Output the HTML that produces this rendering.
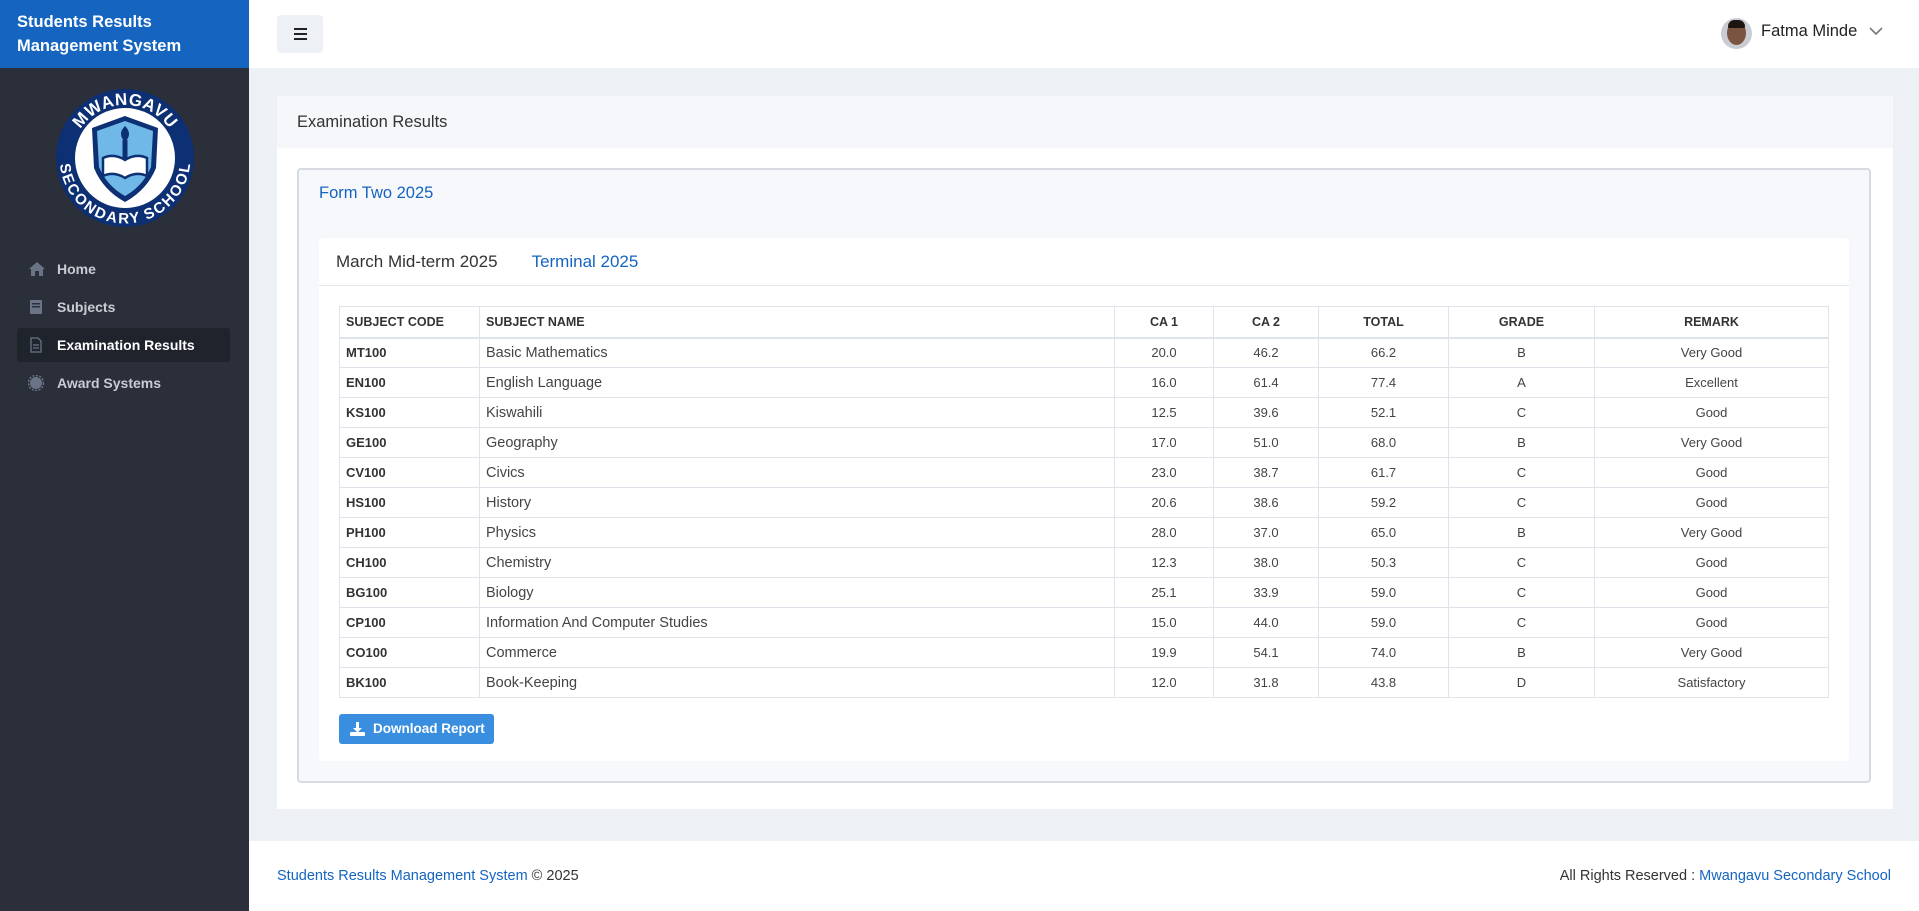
<!DOCTYPE html>
<html><head><meta charset="utf-8">
<style>
*{box-sizing:border-box;margin:0;padding:0}
body{width:1919px;height:911px;overflow:hidden;font-family:"Liberation Sans",sans-serif;background:#edf0f5;position:relative;color:#333}
.side{position:absolute;left:0;top:0;width:249px;height:911px;background:#2a2f3a}
.brand{height:68px;background:#1565c0;color:#fff;font-weight:bold;font-size:16.5px;line-height:24px;padding:10px 0 0 17px}
.nav{position:absolute;left:17px;width:213px;height:34px;color:#c8ccd4;font-size:14px;font-weight:bold;line-height:34px;padding-left:40px}
.nav.act{background:#1f232c;color:#fff;border-radius:3px}
.nav svg{position:absolute;left:11px;top:9px}
.top{position:absolute;left:249px;top:0;right:0;height:68px;background:#fff}
.tog{position:absolute;left:28px;top:15px;width:46px;height:38px;background:#edf0f5;border-radius:4px}
.tog i{position:absolute;left:17px;width:13px;height:2px;background:#222}
.card{position:absolute;left:277px;top:96px;width:1616px;height:713px;background:#fff}
.chead{height:52px;background:#f5f7fa;font-size:16.5px;line-height:52px;padding-left:20px;color:#333}
.box{position:absolute;left:20px;top:72px;width:1574px;height:615px;border:2px solid #d5dae3;border-radius:4px;background:#f6f8fb}
.blue{color:#1565c0}
.inner{position:absolute;left:20px;top:68px;width:1530px;height:523px;background:#fff;border-radius:3px}
.tabs{height:48px;border-bottom:1px solid #e3e7ee;font-size:17px;line-height:48px;padding-left:17px}
table{position:absolute;left:20px;top:68px;width:1490px;border-collapse:collapse;font-size:13px;color:#444}
td,th{border:1px solid #dfe3ea;height:30px;padding:0 6px;text-align:center}
th{height:31px;font-weight:bold;color:#333;font-size:12.5px;border-bottom:2px solid #dfe3ea}
td:nth-child(1),th:nth-child(1){text-align:left;font-weight:bold;color:#333}
td:nth-child(2),th:nth-child(2){text-align:left}
td:nth-child(2){font-size:14.5px}
.btn{position:absolute;left:20px;top:476px;width:155px;height:30px;background:#3a8ee0;border-radius:3px;color:#fff;font-weight:bold;font-size:13.5px;line-height:30px;padding-left:34px}
.foot{position:absolute;left:249px;top:841px;right:0;height:70px;background:#fff;font-size:14.5px;line-height:70px}
</style></head><body>
<div class="side">
<div class="brand">Students Results<br>Management System</div>
<svg style="position:absolute;left:55px;top:88px" width="140" height="140" viewBox="0 0 140 140">
<defs><path id="tp" d="M70,70 m-53,0 a53,53 0 1,1 106,0"/><path id="bp" d="M70,70 m-55,0 a55,55 0 0,0 110,0"/></defs>
<circle cx="70" cy="70" r="69" fill="#0d2f73"/>
<circle cx="70" cy="70" r="50" fill="#fff"/>
<path d="M70,28 L103,40 L101,80 Q92,102 70,114 Q48,102 39,80 L37,40 Z" fill="#0d2f73"/>
<path d="M70,33 L98,43 L96,79 Q88,98 70,108 Q52,98 44,79 L42,43 Z" fill="#6fb8e8"/>
<path d="M48,70 Q59,65 70,72 Q81,65 92,70 L92,88 Q81,83 70,90 Q59,83 48,88 Z" fill="#fff" stroke="#0d2f73" stroke-width="2.5"/>
<rect x="67.5" y="52" width="5" height="20" fill="#0d2f73"/><path d="M70,38 Q78,46 70,54 Q62,46 70,38Z" fill="#0d2f73"/>
<text font-family="Liberation Sans" font-weight="bold" font-size="17" fill="#fff" letter-spacing="0.5"><textPath href="#tp" startOffset="50%" text-anchor="middle">MWANGAVU</textPath></text>
<text font-family="Liberation Sans" font-weight="bold" font-size="15" fill="#fff"><textPath href="#bp" startOffset="50%" text-anchor="middle" dominant-baseline="hanging">SECONDARY SCHOOL</textPath></text>
</svg>
<div class="nav" style="top:252px"><svg width="18" height="16" viewBox="0 0 18 16"><path d="M9 1 L1 8 H3 V15 H7 V10 H11 V15 H15 V8 H17Z" fill="#6b7386"/></svg>Home</div>
<div class="nav" style="top:290px"><svg width="16" height="16" viewBox="0 0 16 16"><rect x="2" y="1" width="12" height="14" rx="1" fill="#6b7386"/><rect x="4" y="4" width="8" height="1.5" fill="#2a2f3a"/><rect x="4" y="7" width="8" height="1.5" fill="#2a2f3a"/></svg>Subjects</div>
<div class="nav act" style="top:328px"><svg width="16" height="16" viewBox="0 0 16 16"><path d="M3 1 H10 L13 4 V15 H3Z M5 8 H11 M5 11 H11" fill="none" stroke="#6b7386" stroke-width="1.3"/></svg>Examination Results</div>
<div class="nav" style="top:366px"><svg width="16" height="16" viewBox="0 0 16 16"><circle cx="8" cy="8" r="6" fill="#6b7386"/><circle cx="8" cy="8" r="7.5" fill="none" stroke="#6b7386" stroke-width="1.5" stroke-dasharray="2 1.5"/></svg>Award Systems</div>
</div>
<div class="top">
<div class="tog"><i style="top:13px"></i><i style="top:18px"></i><i style="top:23px"></i></div>
<div style="position:absolute;left:1472px;top:18px;width:31px;height:31px;border-radius:50%;background:#c9cdd3;overflow:hidden"><div style="position:absolute;left:6px;top:3px;width:19px;height:24px;border-radius:50%;background:#7a5440"></div><div style="position:absolute;left:7px;top:2px;width:17px;height:8px;border-radius:8px 8px 2px 2px;background:#1e1410"></div></div>
<div style="position:absolute;left:1512px;top:22px;font-size:16.5px;color:#222">Fatma Minde</div>
<svg style="position:absolute;left:1620px;top:27px" width="14" height="9"><path d="M1 1 L7 7 L13 1" fill="none" stroke="#777" stroke-width="1.6"/></svg>
</div>
<div class="card">
<div class="chead">Examination Results</div>
<div class="box">
<div class="blue" style="position:absolute;left:20px;top:14px;font-size:16.5px">Form Two 2025</div>
<div class="inner">
<div class="tabs"><span style="color:#333">March Mid-term 2025</span><span class="blue" style="margin-left:34px">Terminal 2025</span></div>
<table>
<colgroup><col style="width:140px"><col style="width:635px"><col style="width:99px"><col style="width:105px"><col style="width:130px"><col style="width:146px"><col></colgroup>
<tr><th>SUBJECT CODE</th><th>SUBJECT NAME</th><th>CA 1</th><th>CA 2</th><th>TOTAL</th><th>GRADE</th><th>REMARK</th></tr>
<tr><td>MT100</td><td>Basic Mathematics</td><td>20.0</td><td>46.2</td><td>66.2</td><td>B</td><td>Very Good</td></tr>
<tr><td>EN100</td><td>English Language</td><td>16.0</td><td>61.4</td><td>77.4</td><td>A</td><td>Excellent</td></tr>
<tr><td>KS100</td><td>Kiswahili</td><td>12.5</td><td>39.6</td><td>52.1</td><td>C</td><td>Good</td></tr>
<tr><td>GE100</td><td>Geography</td><td>17.0</td><td>51.0</td><td>68.0</td><td>B</td><td>Very Good</td></tr>
<tr><td>CV100</td><td>Civics</td><td>23.0</td><td>38.7</td><td>61.7</td><td>C</td><td>Good</td></tr>
<tr><td>HS100</td><td>History</td><td>20.6</td><td>38.6</td><td>59.2</td><td>C</td><td>Good</td></tr>
<tr><td>PH100</td><td>Physics</td><td>28.0</td><td>37.0</td><td>65.0</td><td>B</td><td>Very Good</td></tr>
<tr><td>CH100</td><td>Chemistry</td><td>12.3</td><td>38.0</td><td>50.3</td><td>C</td><td>Good</td></tr>
<tr><td>BG100</td><td>Biology</td><td>25.1</td><td>33.9</td><td>59.0</td><td>C</td><td>Good</td></tr>
<tr><td>CP100</td><td>Information And Computer Studies</td><td>15.0</td><td>44.0</td><td>59.0</td><td>C</td><td>Good</td></tr>
<tr><td>CO100</td><td>Commerce</td><td>19.9</td><td>54.1</td><td>74.0</td><td>B</td><td>Very Good</td></tr>
<tr><td>BK100</td><td>Book-Keeping</td><td>12.0</td><td>31.8</td><td>43.8</td><td>D</td><td>Satisfactory</td></tr>
</table>
<div class="btn"><svg style="position:absolute;left:11px;top:8px" width="15" height="14" viewBox="0 0 15 14"><path d="M6 0 H9 V6 H12 L7.5 10.5 L3 6 H6Z" fill="#fff"/><rect x="0" y="10" width="15" height="4" rx="1" fill="#fff"/></svg>Download Report</div>
</div>
</div>
</div>
<div class="foot"><span style="position:absolute;left:28px"><span class="blue">Students Results Management System</span> © 2025</span><span style="position:absolute;right:28px">All Rights Reserved : <span class="blue">Mwangavu Secondary School</span></span></div>
</body></html>
